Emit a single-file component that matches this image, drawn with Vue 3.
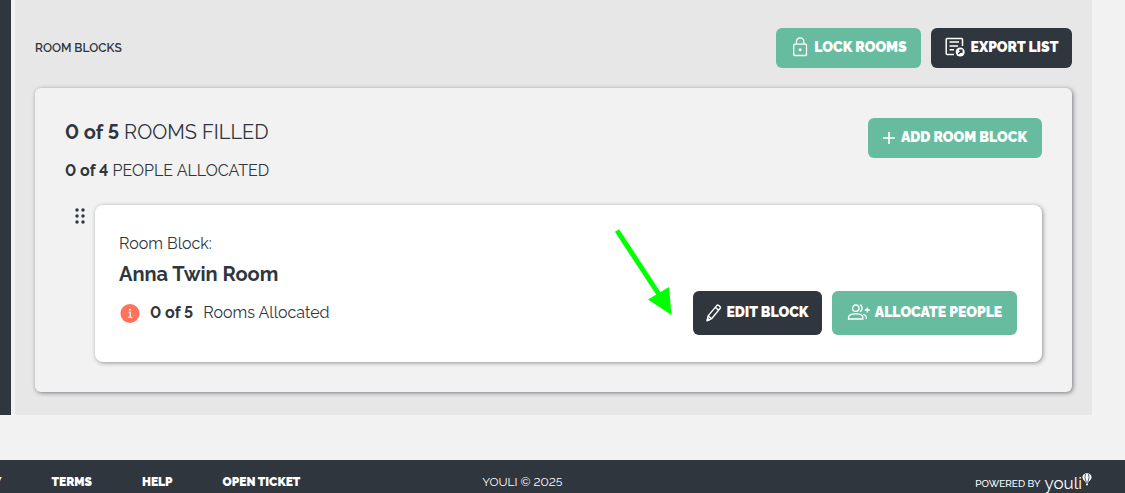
<script setup>
const links = ['PRIVACY', 'TERMS', 'HELP', 'OPEN TICKET']
const dots = [2, 8, 14]
</script>

<template>
  <div class="page">
    <div class="workspace">
      <aside class="rail"></aside>
      <main class="main">
        <header class="bar">
          <h1 class="heading">ROOM BLOCKS</h1>
          <div class="actions">
            <button type="button" class="btn green lock">
              <svg width="16" height="20" viewBox="0 0 16 20" fill="none" stroke="currentColor" stroke-width="1.3">
                <rect x="1.7" y="7.2" width="12.8" height="11.3" rx="1" />
                <path d="M4.4 7V4.6a3.7 3.7 0 0 1 7.4 0V7" />
                <circle cx="8.1" cy="12.8" r="1.5" fill="currentColor" stroke="none" />
              </svg>
              <span>LOCK ROOMS</span>
            </button>
            <button type="button" class="btn dark export">
              <svg width="20" height="20" viewBox="0 0 20 20" fill="none" stroke="currentColor" stroke-width="1.5">
                <path d="M17.5 9V2.4a1 1 0 0 0-1-1H2.2a1 1 0 0 0-1 1v14.2a1 1 0 0 0 1 1H9" />
                <path d="M4.5 5h9.5M4.5 8.9h8.5M4.5 12.8h4.5" />
                <circle cx="15.2" cy="15" r="4.5" fill="currentColor" stroke="none" />
                <path class="cut" d="M13.3 16.9l3.4-3.5M14.1 13.3h2.7V16" />
              </svg>
              <span>EXPORT LIST</span>
            </button>
          </div>
        </header>

        <section class="panel">
          <div class="summary">
            <div>
              <p class="filled"><strong>0 of 5</strong> ROOMS FILLED</p>
              <p class="people"><strong>0 of 4</strong> PEOPLE ALLOCATED</p>
            </div>
            <button type="button" class="btn green add">
              <svg width="12" height="14" viewBox="0 0 12 14" stroke="currentColor" stroke-width="1.6">
                <path d="M6 2v12M0 8h12" />
              </svg>
              <span>ADD ROOM BLOCK</span>
            </button>
          </div>

          <div class="row">
            <button type="button" class="handle" aria-label="Reorder">
              <svg width="10" height="16" viewBox="0 0 10 16" fill="currentColor">
                <template v-for="y in dots" :key="y">
                  <circle cx="2" :cy="y" r="1.7" />
                  <circle cx="8" :cy="y" r="1.7" />
                </template>
              </svg>
            </button>
            <article class="block">
              <div class="info">
                <p class="label">Room Block:</p>
                <h2 class="name">Anna Twin Room</h2>
                <p class="status">
                  <svg width="21" height="20" viewBox="0 0 21 20">
                    <circle cx="11" cy="10.500" r="9.500" fill="#ff725c" />
                    <path d="M9.500 9.200h1.700v5M9 14.300h4.200" fill="none" stroke="#fff" stroke-width="1.1" />
                    <circle cx="11" cy="6.700" r="1" fill="#fff" />
                  </svg>
                  <strong>0 of 5</strong>
                  <span>Rooms Allocated</span>
                </p>
              </div>
              <div class="actions">
                <button type="button" class="btn dark tall edit">
                  <svg width="16" height="20" viewBox="0 0 16 20" fill="none" stroke="currentColor" stroke-width="1.4" stroke-linejoin="round">
                    <path d="M1.2 18.700l.9-4.800L10.700 3.600q.8-.9 1.800-.2l1.500 1.200q.9.8.2 1.700L5.600 16.700z" />
                    <path d="M2.100 13.900l3.500 2.800M9.200 5.400l3.500 2.800M1.200 18.700l.4-2.200 1.600 1.300z" />
                  </svg>
                  <span>EDIT BLOCK</span>
                </button>
                <button type="button" class="btn green tall allocate">
                  <svg width="24" height="18" viewBox="0 0 24 18" fill="none" stroke="currentColor" stroke-width="1.3">
                    <circle cx="8.8" cy="5.2" r="3.2" />
                    <path d="M1.500 16v-1.500c0-2.400 3.400-3.600 7.200-3.600s7.200 1.200 7.200 3.600V16z" />
                    <path d="M13 2c2.600.3 2.600 6 0 6.400M16.200 11.300c2.400.6 3.400 1.800 3.200 4.700M20.300 4.500v5M17.800 7h5" />
                  </svg>
                  <span>ALLOCATE PEOPLE</span>
                </button>
              </div>
              <svg class="arrow" width="60" height="86" viewBox="0 0 60 86" aria-hidden="true">
                <path d="M3 1.500L46 67" stroke="#00ff00" stroke-width="5" />
                <path d="M34 70.500L55 58 57.500 86z" fill="#00ff00" />
              </svg>
            </article>
          </div>
        </section>
      </main>
    </div>

    <footer class="footer">
      <nav class="nav">
        <a v-for="link in links" :key="link" href="#">{{ link }}</a>
      </nav>
      <div class="legal">
        <span>YOULI © 2025</span>
        <div class="powered">
          <span>POWERED BY</span>
          <a class="logo" href="#">
            <span>youli</span>
            <svg width="10" height="13" viewBox="0 0 10 13">
              <path d="M5 .3C7.700.3 9.600 2 9.600 4.300 9.600 6.600 7 8 6.200 9.600H3.800C3 8 .4 6.600.4 4.300.4 2 2.300.3 5 .3z" fill="#fff" />
              <path d="M3.500 1Q2 4.500 4.200 9M6.500 1Q8 4.500 5.800 9" fill="none" stroke="#2f363e" stroke-width=".8" />
              <path d="M4 10.600h2v1.600H4z" fill="#fff" />
            </svg>
          </a>
        </div>
      </div>
    </footer>
  </div>
</template>

<style>
body {
  margin: 0;
  background: #f2f2f2;
}
</style>

<style scoped>
.page {
  font-family: Raleway, Lato, sans-serif;
  font-variant-numeric: lining-nums;
  font-size: 16px;
  line-height: 20px;
  color: #2f363e;
}
p, h1, h2 {
  margin: 0;
}
strong {
  font-weight: 700;
}
.workspace {
  display: flex;
  gap: 4px;
  margin-right: 33px;
}
.rail {
  width: 11px;
  background: #2f363e;
}
.main {
  flex: 1;
  padding: 28px 20px 23px;
  background: #e7e7e7;
}
.bar, .summary {
  display: flex;
  justify-content: space-between;
  align-items: center;
}
.bar {
  margin-bottom: 20px;
}
.heading {
  font-size: 12px;
  font-weight: 600;
}
.actions {
  display: flex;
  gap: 10px;
}
.btn {
  display: flex;
  align-items: center;
  justify-content: center;
  gap: 6px;
  height: 40px;
  padding: 0 0 2px;
  border: 0;
  border-radius: 6px;
  color: #fff;
  font: 900 14px/20px Raleway, Lato, sans-serif;
  white-space: nowrap;
}
.tall {
  height: 44px;
}
.green {
  background: #67bca0;
}
.dark {
  background: #2f363e;
}
.cut {
  stroke: #2f363e;
}
.lock {
  width: 145px;
  padding-left: 2px;
}
.export {
  width: 141px;
}
.add {
  width: 174px;
}
.edit {
  width: 129px;
  gap: 4px;
}
.allocate {
  width: 185px;
  gap: 4px;
}
.panel {
  padding: 30px;
  border-radius: 6px;
  background: #f2f2f2;
  box-shadow: 1px 1px 4px rgba(47, 54, 62, 0.6);
}
.summary {
  align-items: flex-start;
  margin-bottom: 24px;
}
.filled {
  font-size: 20px;
  line-height: 28px;
  margin-bottom: 14px;
}
.people {
  line-height: 21px;
}
.row {
  display: flex;
  align-items: flex-start;
  gap: 10px;
  padding-left: 10px;
}
.handle {
  display: flex;
  width: 10px;
  padding: 3px 0 0;
  border: 0;
  background: none;
  color: #2f363e;
}
.block {
  position: relative;
  flex: 1;
  display: flex;
  justify-content: space-between;
  align-items: flex-end;
  padding: 29px 25px 27px 24px;
  border-radius: 8px;
  background: #fff;
  box-shadow: 1px 1px 4px rgba(47, 54, 62, 0.5);
}
.name {
  margin: 6px 0 15px;
  font-size: 20px;
  line-height: 28px;
  font-weight: 700;
}
.status {
  display: flex;
  align-items: center;
  gap: 10px;
  margin-bottom: 12px;
}
.arrow {
  position: absolute;
  right: 368px;
  top: 24px;
  overflow: visible;
}
.footer {
  display: grid;
  grid-template-columns: 3fr 4fr;
  margin-top: 45px;
  padding-top: 12px;
  background: #2f363e;
  color: #fff;
  font-size: 12px;
}
.nav {
  display: flex;
  gap: 50px;
  margin-left: -49px;
}
.nav a {
  color: #fff;
  font-weight: 900;
  text-decoration: none;
  white-space: nowrap;
}
.legal {
  display: flex;
  justify-content: space-between;
  padding-right: 33px;
}
.powered {
  display: flex;
  align-items: flex-end;
  gap: 4px;
  height: 21px;
  font-size: 10px;
  font-weight: 500;
  line-height: 18px;
}
.logo {
  display: flex;
  color: #fff;
  text-decoration: none;
  font-size: 17px;
  font-weight: 400;
  line-height: 20px;
}
</style>
